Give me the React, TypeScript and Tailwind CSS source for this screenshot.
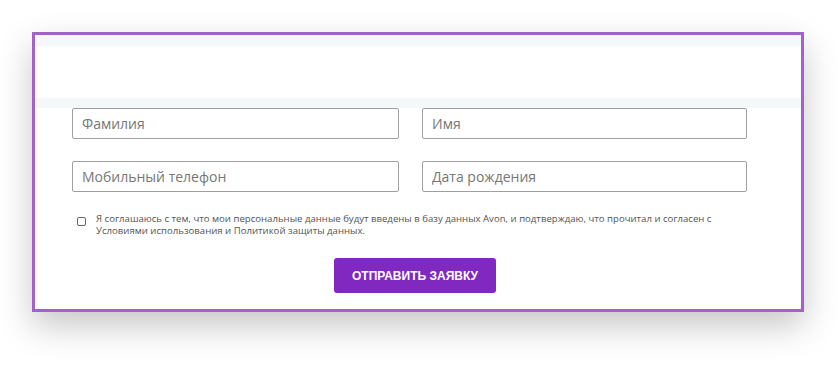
export default function App() {
  const fields = ['Фамилия', 'Имя', 'Мобильный телефон', 'Дата рождения'];

  return (
    <div className="w-[838px] h-[366px] bg-white pt-[32px] pl-[32px] overflow-hidden">
      {/* Form frame */}
      <div className="w-[772px] h-[280px] border-[3px] border-[#a262c8] bg-white shadow-[0_14px_32px_rgba(0,0,0,0.22)] flex flex-col">
        <div className="h-[11px] bg-[#f4f8f8]" />
        <div className="h-[52px] bg-white" />
        <div className="h-[10px] bg-[#f4f8f8]" />

        <div className="grid grid-cols-[327px_325px] gap-x-[23px] gap-y-[22px] pl-[37px]" style={{ fontFamily: '"Open Sans", sans-serif' }}>
          {fields.map((label) => (
            <input
              key={label}
              placeholder={label}
              className="h-[31px] border border-[#a0a0a0] rounded-[2px] px-[9px] text-[14px] text-[#555] placeholder:text-[#777] outline-none"
            />
          ))}
        </div>

        {/* Consent */}
        <label className="flex items-start gap-[10px] pl-[42px] mt-[21px]" style={{ fontFamily: '"Open Sans", sans-serif' }}>
          <span className="mt-[4px] w-[9px] h-[9px] rounded-[2px] border border-[#666] shrink-0" />
          <span className="text-[9.6px] leading-[12px] text-[#555]">
            Я соглашаюсь с тем, что мои персональные данные будут введены в базу данных Avon, и подтверждаю, что прочитал и согласен с
            <br />
            Условиями использования и Политикой защиты данных.
          </span>
        </label>

        <div className="pl-[299px] mt-[21px]">
          <button
            className="w-[162px] h-[35px] rounded-[3px] bg-[#8028c0] text-white text-[12px] font-bold uppercase"
            style={{ fontFamily: '"Liberation Sans", Arial, sans-serif' }}
          >
            Отправить заявку
          </button>
        </div>
      </div>
    </div>
  );
}
